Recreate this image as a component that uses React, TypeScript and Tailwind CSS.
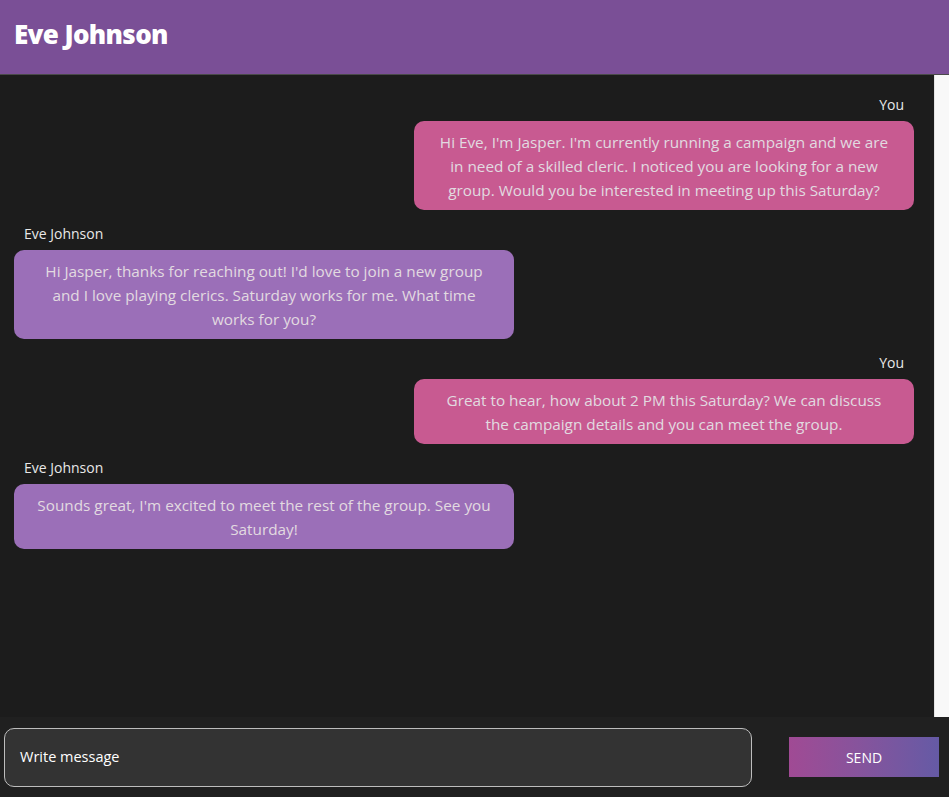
import React from 'react';

type Message = {
  from: 'me' | 'them';
  lines: string[];
};

const messages: Message[] = [
  {
    from: 'me',
    lines: [
      "Hi Eve, I'm Jasper. I'm currently running a campaign and we are",
      'in need of a skilled cleric. I noticed you are looking for a new',
      'group. Would you be interested in meeting up this Saturday?',
    ],
  },
  {
    from: 'them',
    lines: [
      "Hi Jasper, thanks for reaching out! I'd love to join a new group",
      'and I love playing clerics. Saturday works for me. What time',
      'works for you?',
    ],
  },
  {
    from: 'me',
    lines: [
      'Great to hear, how about 2 PM this Saturday? We can discuss',
      'the campaign details and you can meet the group.',
    ],
  },
  {
    from: 'them',
    lines: [
      "Sounds great, I'm excited to meet the rest of the group. See you",
      'Saturday!',
    ],
  },
];

const font = { fontFamily: '"Open Sans", "Noto Sans", sans-serif' };

function Bubble({ msg }: { msg: Message }) {
  const mine = msg.from === 'me';
  return (
    <div className={`flex flex-col ${mine ? 'items-end' : 'items-start'}`}>
      <div className={`text-[14px] leading-5 text-[#e8e8e8] mb-1.5 ${mine ? 'pr-2.5' : 'pl-2.5'}`}>
        {mine ? 'You' : 'Eve Johnson'}
      </div>
      <div
        className={`w-[500px] rounded-[10px] px-3 py-[8.5px] text-center text-[15.3px] leading-6 text-[#e2dae0] ${
          mine ? 'bg-[#c85a91]' : 'bg-[#9b6fb8]'
        }`}
      >
        {msg.lines.map((l, i) => (
          <span key={i} className="block whitespace-nowrap">
            {l}
          </span>
        ))}
      </div>
    </div>
  );
}

export default function App() {
  return (
    <div className="h-[797px] w-[949px] flex flex-col bg-[#1c1c1c] overflow-hidden" style={font}>
      <header className="h-[75px] shrink-0 bg-[#7a4f96] border-b border-[#4a4a4a] flex items-center px-[14px] pb-[6px]">
        <h1 className="text-[26px] font-extrabold text-white tracking-tight">Eve Johnson</h1>
      </header>

      <div className="flex-1 flex min-h-0">
        <div className="flex-1 flex flex-col gap-[14px] pt-[20px] pl-[14px] pr-[20px]">
          {messages.map((m, i) => (
            <Bubble key={i} msg={m} />
          ))}
        </div>
        <div className="w-[15px] bg-[#f8f8f8] border-l border-[#e4e4e4]" />
      </div>

      <footer className="h-[80px] shrink-0 bg-[#202020] flex items-center pl-[4px] pr-[10px]">
        <div className="w-[748px] h-[59px] rounded-[10px] border border-[#bdbdbd] bg-[#333333] flex items-center px-[15px]">
          <span className="text-[14.5px] text-white">Write message</span>
        </div>
        <div className="flex-1" />
        <button className="w-[150px] h-[40px] bg-gradient-to-r from-[#a04a94] to-[#655aa5] text-white text-[14px] font-medium">
          SEND
        </button>
      </footer>
    </div>
  );
}
